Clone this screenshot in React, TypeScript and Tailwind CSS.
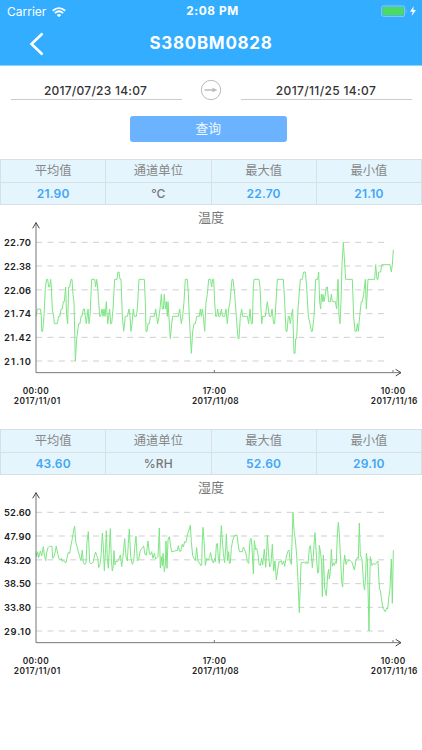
import React from "react";

const temperature =
  "108,304 112,282 121,282 124,304 125,349 128,349 132,304 136,216 140,193 143,193 146,216 149,216 152,193 154,216 157,282 161,304 163,326 172,326 176,304 180,304 183,282 187,282 190,260 193,260 197,216 200,304 203,326 206,216 209,216 213,193 216,193 219,238 222,260 226,438 230,371 233,349 236,326 240,326 243,304 246,304 250,282 253,282 256,304 259,326 264,282 267,326 270,304 275,193 284,193 287,216 290,193 293,216 296,260 299,304 302,304 306,282 309,304 312,282 315,304 319,260 323,326 326,304 329,282 332,326 335,326 339,282 344,193 351,193 354,171 357,171 360,193 363,193 367,304 371,349 376,304 382,304 387,282 390,304 393,349 396,326 400,282 403,304 409,304 412,282 417,193 433,193 436,260 438,349 441,349 444,326 448,326 451,304 463,304 467,282 470,304 473,326 477,304 480,282 484,238 487,282 490,282 493,238 496,282 499,260 502,304 504,260 508,326 511,371 515,326 518,304 535,304 539,282 544,326 548,304 552,260 556,193 562,193 565,238 569,326 574,415 578,349 582,326 586,326 590,304 598,304 601,282 604,304 607,282 610,304 614,349 618,260 622,238 626,193 632,193 635,216 638,193 641,193 644,260 647,304 650,304 653,282 656,304 660,304 664,282 668,304 674,304 678,282 682,326 686,282 690,260 696,193 699,193 704,238 709,304 714,371 717,371 721,304 725,282 728,304 742,304 746,326 750,282 754,326 757,326 760,216 762,193 777,193 780,216 785,326 788,304 796,304 802,260 808,304 813,304 816,282 821,326 824,326 828,260 832,193 850,193 854,260 858,349 861,349 865,304 868,304 871,326 874,304 878,282 882,415 885,415 887,371 890,371 894,282 901,193 907,193 911,171 916,171 920,216 925,304 930,326 934,349 937,349 942,304 947,193 953,193 956,171 959,260 962,282 964,238 967,260 969,238 972,260 976,238 979,216 982,216 986,260 991,260 994,238 997,260 1006,260 1010,282 1014,193 1017,304 1020,326 1023,260 1026,149 1030,82 1033,127 1037,193 1057,193 1061,304 1065,349 1069,349 1072,326 1075,349 1079,304 1084,260 1087,260 1091,238 1096,193 1099,282 1104,193 1124,193 1127,149 1131,193 1134,193 1136,171 1142,171 1145,149 1170,149 1174,171 1177,149 1180,104";

const humidity =
  "108,203 110,215 113,200 116,218 121,198 125,213 130,185 133,210 137,227 140,203 144,188 148,184 156,184 158,220 163,213 169,183 173,206 177,221 181,225 184,220 187,230 191,226 195,232 198,233 202,215 205,202 209,205 213,180 217,160 221,136 224,123 227,170 231,185 235,200 239,215 243,227 247,195 250,232 254,239 258,234 261,170 265,140 269,232 273,237 277,234 280,230 284,210 287,201 290,212 293,218 296,248 300,238 303,215 307,144 310,185 313,257 317,190 319,137 322,220 325,250 328,190 331,131 334,225 337,258 340,240 342,197 345,239 348,228 352,230 356,224 361,210 365,245 369,215 374,161 378,215 382,228 385,175 388,132 392,215 397,238 401,229 404,190 408,153 412,228 416,224 420,200 424,192 428,188 431,183 435,208 439,210 444,168 448,204 451,209 455,200 459,220 463,205 467,222 471,218 474,215 478,129 481,249 484,215 487,243 489,205 493,260 496,240 498,168 501,250 504,165 508,155 512,185 515,200 532,196 535,182 538,198 542,199 547,178 550,186 554,170 558,172 562,150 567,135 571,121 574,170 578,212 582,220 586,227 590,188 594,230 598,232 602,242 605,240 607,165 609,127 612,165 616,241 620,220 624,226 628,218 632,203 636,225 640,234 644,220 646,230 649,180 652,175 655,220 658,235 661,180 664,122 667,165 670,205 674,233 677,190 679,148 683,227 686,200 688,235 691,234 694,190 698,166 703,152 711,150 714,175 718,200 727,200 730,186 734,194 739,210 742,230 746,235 750,165 753,160 756,185 760,267 763,167 767,194 770,190 774,208 777,238 781,242 785,220 788,240 793,192 797,247 800,200 802,150 806,210 809,246 813,235 817,178 821,258 825,228 829,285 833,255 837,230 840,232 844,227 847,238 851,229 854,244 858,220 863,200 867,195 870,225 874,238 876,170 879,82 882,135 886,165 890,210 894,290 898,383 901,300 903,234 914,231 917,236 920,230 924,236 928,190 931,182 935,222 937,248 940,215 942,180 945,143 949,210 953,264 956,262 958,181 962,205 965,240 967,335 970,210 974,310 979,332 983,270 986,253 988,282 991,260 994,193 997,244 1000,234 1003,241 1006,230 1009,235 1012,150 1015,112 1018,150 1022,225 1025,290 1028,306 1031,240 1034,210 1038,238 1042,228 1049,225 1052,229 1056,232 1063,255 1068,225 1073,216 1075,220 1078,114 1081,210 1086,222 1091,300 1094,315 1097,270 1099,205 1102,225 1107,438 1109,300 1111,215 1116,242 1120,235 1126,238 1134,228 1137,290 1139,313 1141,315 1144,340 1149,370 1156,380 1161,368 1163,372 1166,340 1170,310 1174,222 1177,355 1180,196";

const gridLines = [82, 153, 224.5, 296, 367, 438];

const xLabels = [
  { x: 107, time: "00:00", date: "2017/11/01", timeWidth: 78, dateX: 111 },
  { x: 643, time: "17:00", date: "2017/11/08", timeWidth: 70, dateX: 646 },
  { x: 1179, time: "10:00", date: "2017/11/16", timeWidth: 74, dateX: 1182 },
];

type SectionProps = {
  title: string;
  average: string;
  unit: string;
  max: string;
  min: string;
  ticks: string[];
  points: string;
};

const Chart = ({ ticks, points }: { ticks: string[]; points: string }) => {
  return (
    <svg
      viewBox="0 0 1266 600"
      className="-mt-4 block h-[200px] w-[422px]"
      fill="none"
    >
      {gridLines.map((y, i) => (
        <g key={y}>
          <path
            d={`M108 ${y}H1168`}
            stroke="#cfcfcf"
            strokeWidth="3"
            strokeDasharray="18 16.2"
          />
          <text
            x="93"
            y={y + 11}
            textAnchor="end"
            textLength="81"
            className="fill-[#222] text-[28px] font-semibold"
          >
            {ticks[i]}
          </text>
        </g>
      ))}
      <polyline points={points} stroke="#7ee584" strokeWidth="3" />
      <path
        d="M108 23V473H1203M643 473V465M1179 473V465"
        stroke="#777"
        strokeWidth="3"
      />
      <path
        d="M98 40L108 23L118 40M1187 463L1203 473L1187 483"
        stroke="#444"
        strokeWidth="3"
      />
      {xLabels.map((label) => (
        <g
          key={label.date}
          textAnchor="middle"
          className="fill-[#222] text-[25px] font-semibold"
        >
          <text x={label.x} y="538" textLength={label.timeWidth}>
            {label.time}
          </text>
          <text x={label.dateX} y="568" textLength="140">
            {label.date}
          </text>
        </g>
      ))}
    </svg>
  );
};

const Section = ({
  title,
  average,
  unit,
  max,
  min,
  ticks,
  points,
}: SectionProps) => {
  const columns = [
    { name: "平均值", value: average, color: "text-[#42a5f5] font-semibold" },
    { name: "通道单位", value: unit, color: "text-[#777] font-medium" },
    { name: "最大值", value: max, color: "text-[#42a5f5] font-semibold" },
    { name: "最小值", value: min, color: "text-[#42a5f5] font-semibold" },
  ];
  return (
    <section className="h-[270px]">
      <div className="grid h-[46px] grid-cols-4 border-t border-l border-[#d9e0e4] bg-[#e4f5fe] text-center">
        {columns.map((column) => (
          <div key={column.name} className="border-r border-[#d9e0e4]">
            <div className="h-[23px] border-b border-[#d9e0e4] text-[12.3px] leading-[22px] text-[#888]">
              {column.name}
            </div>
            <div
              className={`h-[22px] border-b border-[#d9e0e4] text-[12px] leading-[22px] tracking-[0.2px] ${column.color}`}
            >
              {column.value}
            </div>
          </div>
        ))}
      </div>
      <h2 className="h-[26px] text-center text-[13px] leading-[24px] text-[#777]">
        {title}
      </h2>
      <Chart ticks={ticks} points={points} />
    </section>
  );
};

const App = () => {
  return (
    <div className="h-[750px] w-[422px] overflow-hidden bg-white font-['Inter','Noto_Sans_CJK_SC',sans-serif]">
      <header className="h-[66px] border-b border-[#8fd3ff] bg-[#33adff] text-white">
        <div className="grid h-[22px] grid-cols-3 items-center pr-[5px] pl-[7px]">
          <div className="flex items-center gap-[6px] pt-0.5 text-[12px]">
            Carrier
            <svg viewBox="0 0 42 32" className="h-[10.5px] w-[14px]" fill="white">
              <path d="M21 31L14 24Q21 18 28 24Z" />
              <path
                d="M8.5 18.5Q21 7.5 33.5 18.5M2 11.5Q21 -5 40 11.5"
                fill="none"
                stroke="white"
                strokeWidth="5.5"
              />
            </svg>
          </div>
          <div className="pt-0.5 pl-px text-center text-[11.8px] font-bold tracking-[0.6px]">
            2:08 PM
          </div>
          <svg
            viewBox="0 0 108 36"
            className="h-3 w-9 justify-self-end"
            fill="none"
          >
            <rect
              x="2"
              y="3"
              width="69"
              height="31"
              rx="5"
              stroke="#8fcdf5"
              strokeWidth="3"
            />
            <rect x="5" y="6" width="63" height="25" rx="3" fill="#4cd964" />
            <path d="M75 13Q79 18 75 24Z" fill="#8fcdf5" />
            <path d="M98 4L87 20H95L92 33L105 15H97Z" fill="white" />
          </svg>
        </div>
        <div className="grid h-[43px] grid-cols-[60px_1fr_60px] items-center">
          <svg
            viewBox="0 0 14 24"
            className="ml-[29px] h-6 w-[15px]"
            fill="none"
            stroke="white"
            strokeWidth="2.6"
          >
            <path d="M13 1.5L2 12L13 22.5" />
          </svg>
          <h1 className="pt-px text-center text-[17px] font-bold tracking-[0.7px]">
            S380BM0828
          </h1>
        </div>
      </header>

      <div className="flex justify-between px-[10.5px] pt-2.5">
        <div className="h-6 w-[171px] border-b border-[#ccc] pr-px text-center text-[12px] leading-[29px] font-medium tracking-[0.25px] text-[#333]">
          2017/07/23 14:07
        </div>
        <svg
          viewBox="0 0 22 22"
          className="mt-[3px] h-[22px] w-[22px]"
          fill="none"
          stroke="#bbb"
        >
          <circle cx="11" cy="11" r="9.7" />
          <path d="M4.5 11H13" strokeWidth="1.5" />
          <path d="M12.5 8.8L17.5 11L12.5 13.2Z" fill="#bbb" stroke="none" />
        </svg>
        <div className="h-6 w-[171px] border-b border-[#ccc] text-center text-[12px] leading-[29px] font-medium tracking-[0.35px] text-[#333]">
          2017/11/25 14:07
        </div>
      </div>

      <button className="mt-[15px] ml-[129.5px] block h-[26px] w-[157.5px] rounded-[3px] bg-[#6cb3ff] text-[12.8px] leading-[26px] text-white/90">
        查询
      </button>

      <main className="mt-[17px]">
        <Section
          title="温度"
          average="21.90"
          unit="℃"
          max="22.70"
          min="21.10"
          ticks={["22.70", "22.38", "22.06", "21.74", "21.42", "21.10"]}
          points={temperature}
        />
        <Section
          title="湿度"
          average="43.60"
          unit="%RH"
          max="52.60"
          min="29.10"
          ticks={["52.60", "47.90", "43.20", "38.50", "33.80", "29.10"]}
          points={humidity}
        />
      </main>
    </div>
  );
};

export default App;
